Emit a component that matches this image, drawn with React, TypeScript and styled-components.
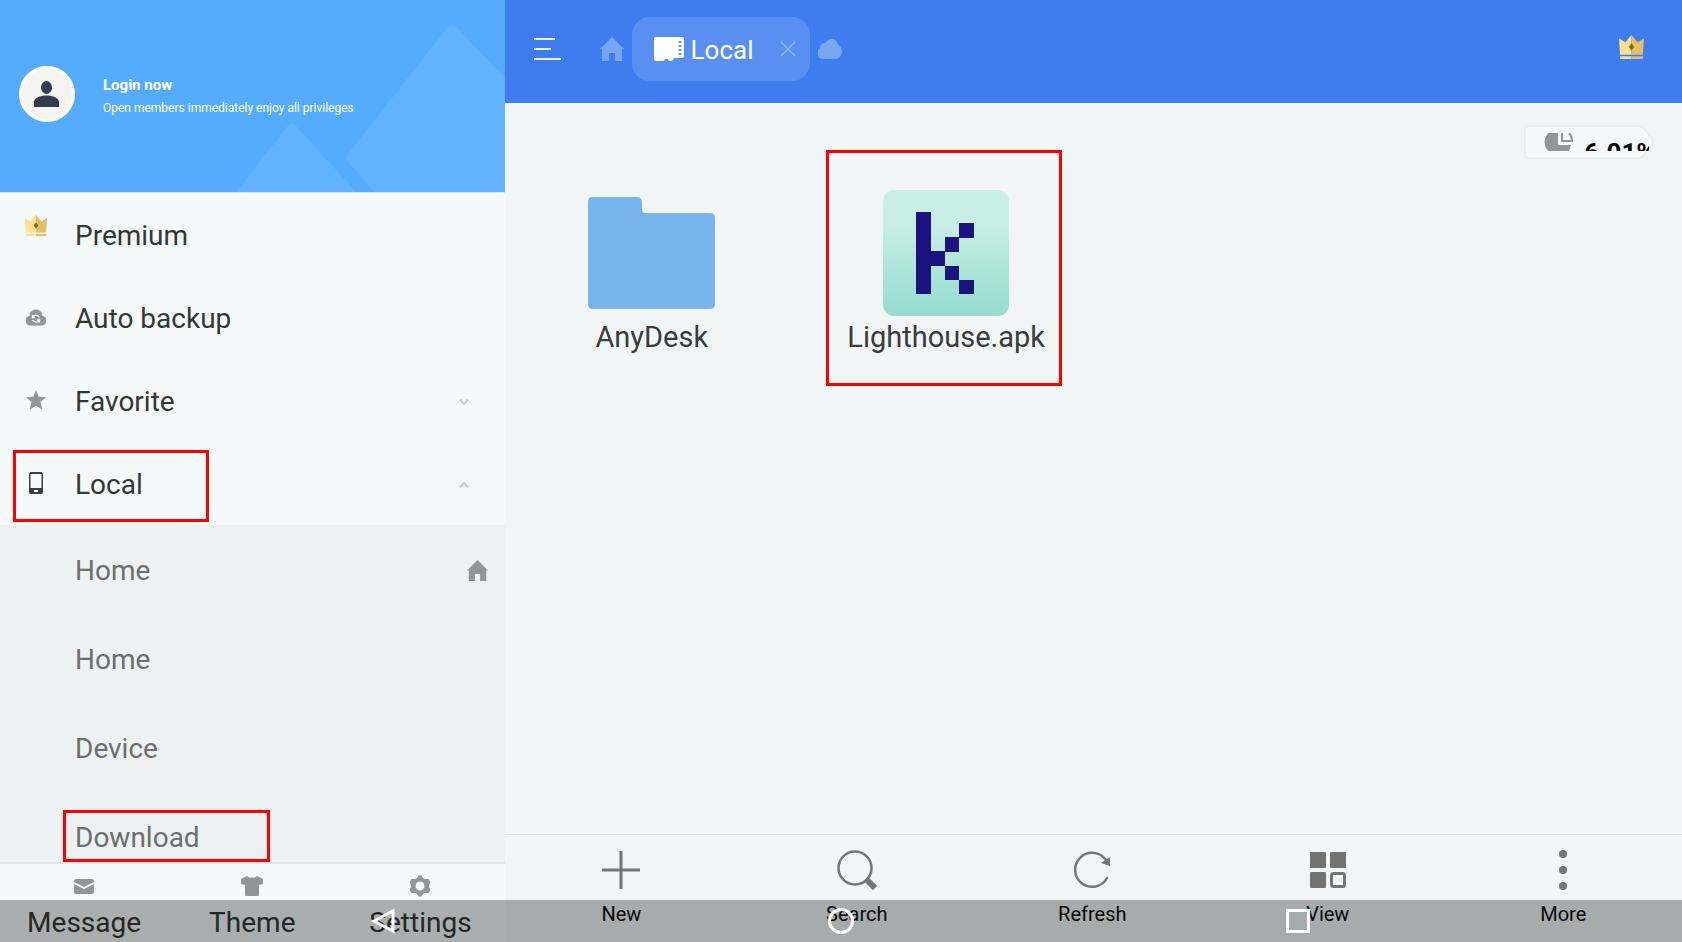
import React from "react";
import styled, { createGlobalStyle, css } from "styled-components";

const Global = createGlobalStyle`
  *, *::after { box-sizing: border-box; }
  body { margin: 0; font-family: Roboto, "Liberation Sans", sans-serif; background: #f1f5f6; }
  button { font: inherit; color: inherit; background: none; border: 0; padding: 0; margin: 0; text-align: left; }
  a { color: inherit; text-decoration: none; }
  svg { display: block; flex: none; }
`;

const mark = css`
  &::after {
    content: "";
    position: absolute;
    border: 3px solid #fe0000;
    pointer-events: none;
  }
`;

const Screen = styled.div`
  position: relative;
  display: flex;
  height: 100vh;
  overflow: hidden;
`;

const Sidebar = styled.aside`
  width: 30%;
  display: flex;
  flex-direction: column;
  background: #f5f9fa;
`;

const Profile = styled.header`
  position: relative;
  display: flex;
  align-items: center;
  gap: 28px;
  height: 193px;
  flex: none;
  padding: 0 0 5px 19px;
  border-bottom: 1px solid #cfe8f8;
  background: #55acff;
  color: #fff;
  overflow: hidden;
`;

const Peaks = styled.svg`
  position: absolute;
  right: 0;
  bottom: 0;
`;

const Avatar = styled.button`
  display: grid;
  place-items: center;
  width: 56px;
  height: 56px;
  border: 3px solid #fff;
  border-radius: 50%;
  background: #f4f4f2;
`;

const LoginText = styled.a`
  display: flex;
  flex-direction: column;
  gap: 5px;
  padding-top: 5px;
  font-size: 12px;
  line-height: 18px;
`;

const LoginTitle = styled.strong`
  font-size: 15px;
  line-height: 18px;
`;

const Menu = styled.nav`
  flex: 1;
  min-height: 0;
  overflow: hidden;
  font-size: 28px;
  line-height: 36px;
`;

const MenuRow = styled.button<{ $marked?: boolean }>`
  position: relative;
  display: flex;
  align-items: center;
  width: 100%;
  height: 83px;
  padding: 3px 35px 0 20px;
  color: #333837;
  ${(p) => p.$marked && mark}
  &::after { left: 13px; width: 196px; top: 8px; height: 72px; }
`;

const MenuIcon = styled.span<{ $raised?: boolean }>`
  display: grid;
  place-items: center;
  width: 32px;
  height: 48px;
  margin-right: 23px;
  padding-bottom: ${(p) => (p.$raised ? 20 : 4)}px;
`;

const RowLabel = styled.span`
  flex: 1;
`;

const SubMenu = styled.div`
  padding-top: 1px;
  background: #edf1f2;
  color: #6b6f6f;
`;

const SubRow = styled.button<{ $marked?: boolean }>`
  position: relative;
  display: flex;
  align-items: center;
  width: 100%;
  height: 89px;
  padding: 0 17px 0 75px;
  ${(p) => p.$marked && mark}
  &::after { left: 63px; width: 207px; top: 17px; height: 52px; }
`;

const SideTabs = styled.footer`
  display: grid;
  grid-template-columns: repeat(3, 1fr);
  flex: none;
  height: 80px;
  border-top: 2px solid #e3e7e8;
`;

const SideTab = styled.button`
  display: flex;
  flex-direction: column;
  align-items: center;
  gap: 8px;
  padding-top: 11px;
  height: 74px;
  overflow: hidden;
  font-size: 28px;
  line-height: 36px;
  color: #333837;
`;

const Main = styled.main`
  flex: 1;
  min-width: 0;
  display: flex;
  flex-direction: column;
  background: #f1f5f6;
`;

const TopBar = styled.header`
  display: flex;
  align-items: center;
  flex: none;
  height: 103px;
  padding: 0 37px 5px 29px;
  background: #3f7cee;
  color: #fff;
`;

const MenuButton = styled.button`
  margin-right: 38px;
`;

const Tab = styled.div`
  display: flex;
  align-items: center;
  gap: 7px;
  height: 64px;
  margin: 0 8px;
  padding: 0 14px 0 22px;
  border-radius: 18px;
  background: #5a8ff2;
  font-size: 26px;
  line-height: 32px;
`;

const TabTitle = styled.span`
  padding-top: 2px;
`;

const CloseTab = styled.button`
  margin-left: 19px;
`;

const Crown = styled.button`
  margin-left: auto;
  padding-bottom: 3px;
`;

const Files = styled.section`
  position: relative;
  flex: 1;
  padding-top: 83px;
`;

const FileGrid = styled.div`
  display: grid;
  grid-template-columns: repeat(4, 1fr);
`;

const File = styled.button<{ $marked?: boolean }>`
  position: relative;
  display: flex;
  flex-direction: column;
  align-items: center;
  font-size: 29px;
  line-height: 34px;
  color: #383c3c;
  ${(p) => p.$marked && mark}
  &::after { left: 50%; margin-left: -120px; width: 236px; top: -36px; height: 236px; }
`;

const FileArt = styled.span`
  display: grid;
  place-items: center;
  height: 134px;
`;

const Storage = styled.button`
  position: absolute;
  top: 22px;
  right: 28px;
  width: 130px;
  height: 34px;
`;

const StorageClip = styled.span`
  position: absolute;
  left: 20px;
  right: 5px;
  top: 8px;
  height: 18px;
  display: flex;
  gap: 10px;
  overflow: hidden;
  color: #000;
  font-size: 26px;
  font-weight: 700;
  line-height: 36px;
`;

const StorageValue = styled.span`
  padding-top: 2px;
`;

const ToolBar = styled.footer`
  display: grid;
  grid-template-columns: repeat(5, 1fr);
  flex: none;
  height: 108px;
  border-top: 1px solid #dfe3e4;
`;

const Tool = styled.button`
  display: flex;
  flex-direction: column;
  align-items: center;
  gap: 12px;
  padding: 15px 2px 0 0;
  font-size: 20px;
  line-height: 24px;
  color: #0c0d0d;
`;

const SystemButtons = styled.nav`
  position: absolute;
  left: 0;
  right: 0;
  bottom: 0;
  height: 42px;
  display: flex;
  align-items: center;
  justify-content: space-between;
  padding: 0 22%;
  background: rgba(0, 0, 0, 0.3);
`;

function CrownIcon({ size }: { size: number }) {
  return (
    <svg width={size} height={size} viewBox="0 0 26 26">
      <path d="M1 4l6 4 6-7v19H2z" fill="#fae192" />
      <path d="M25 4l-6 4-6-7v19h11z" fill="#e3bf68" />
      <path d="M2 21.500h11V24H2z" fill="#f7e2a5" />
      <path d="M13 21.500h11V24H13z" fill="#e3bf68" />
      <path d="M13 9l2.500 3.500L13 16l-2.500-3.500z" fill="#8f6804" />
    </svg>
  );
}

function HomeIcon({ color, size }: { color: string; size: number }) {
  return (
    <svg width={size} height={size} viewBox="0 0 24 24">
      <path d="M12 0L0 12h2v12h7v-8h6v8h7V12h2z" fill={color} />
    </svg>
  );
}

function Chevron({ up }: { up?: boolean }) {
  return (
    <svg width="12" height="8" viewBox="0 0 12 8" fill="none" stroke="#c6caca" strokeWidth="2">
      <path d={up ? "M2 6.500L6 2l4 4.500" : "M2 1.500L6 6l4-4.500"} />
    </svg>
  );
}

export default function App() {
  return (
    <>
      <Global />
      <Screen>
        <Sidebar>
          <Profile>
            <Peaks width="270" height="192" viewBox="0 0 270 192" aria-hidden="true">
              <g fill="#62b3ff">
                <path d="M1 192L53 126q4-5 8 0l60 66z" />
                <path d="M270 78L221 27q-5-4-9 1L113 154q-3 4 0 8l27 30h130z" />
              </g>
            </Peaks>
            <Avatar aria-label="Account">
              <svg width="26" height="26" viewBox="0 0 26 26" fill="#363b4d">
                <ellipse cx="12.500" cy="6.500" rx="5.500" ry="6.500" />
                <path d="M0 26v-5c0-4 6-6.500 12.500-6.500S25 17 25 21v5z" />
              </svg>
            </Avatar>
            <LoginText href="#login">
              <LoginTitle>Login now</LoginTitle>
              Open members immediately enjoy all privileges
            </LoginText>
          </Profile>
          <Menu>
            <MenuRow>
              <MenuIcon $raised><CrownIcon size={24} /></MenuIcon>
              <RowLabel>Premium</RowLabel>
            </MenuRow>
            <MenuRow>
              <MenuIcon>
                <svg width="22" height="17" viewBox="0 0 22 17">
                  <path d="M5 16.500a5 5 0 0 1-.5-9.800C5 3 7.500.5 11 .5s6 2.500 6.500 6.200a5 5 0 0 1-.5 9.800z" fill="#929696" />
                  <path d="M14.500 8.500a4 3.500 0 0 0-6.500-1.200M7.500 6v2.500h2.500M7.500 11a4 3.500 0 0 0 6.500 1M14.500 13.500v-2.500h-2.500" fill="none" stroke="#f5f9fa" strokeWidth="1.300" />
                </svg>
              </MenuIcon>
              <RowLabel>Auto backup</RowLabel>
            </MenuRow>
            <MenuRow>
              <MenuIcon>
                <svg width="20" height="20" viewBox="0 0 20 20" fill="#929696">
                  <path d="M10 0l2.800 6.700 7.200.6-5.400 4.800 1.600 7.400-6.200-3.700-6.200 3.700 1.600-7.400L0 7.300l7.200-.6z" />
                </svg>
              </MenuIcon>
              <RowLabel>Favorite</RowLabel>
              <Chevron />
            </MenuRow>
            <MenuRow $marked>
              <MenuIcon>
                <svg width="14" height="22" viewBox="0 0 14 22">
                  <path fillRule="evenodd" d="M2 0h10a2 2 0 0 1 2 2v18a2 2 0 0 1-2 2H2a2 2 0 0 1-2-2V2a2 2 0 0 1 2-2zM1.500 2v14h11V2zM5 18v2h4v-2z" fill="#3a3e3e" />
                </svg>
              </MenuIcon>
              <RowLabel>Local</RowLabel>
              <Chevron up />
            </MenuRow>
            <SubMenu>
              <SubRow>
                <RowLabel>Home</RowLabel>
                <HomeIcon color="#929696" size={21} />
              </SubRow>
              <SubRow>Home</SubRow>
              <SubRow>Device</SubRow>
              <SubRow $marked>Download</SubRow>
            </SubMenu>
          </Menu>
          <SideTabs>
            <SideTab>
              <svg width="20" height="22" viewBox="0 0 20 22" fill="#929696">
                <path d="M2 4h16a2 2 0 0 1 2 2v1l-10 5L0 7V6a2 2 0 0 1 2-2z" />
                <path d="M0 9l10 5 10-5v8a2 2 0 0 1-2 2H2a2 2 0 0 1-2-2z" />
              </svg>
              Message
            </SideTab>
            <SideTab>
              <svg width="22" height="22" viewBox="0 0 22 22" fill="#929696">
                <path d="M6 1l2 1.500h6L16 1l6 3v5l-4 1v10a1 1 0 0 1-1 1H5a1 1 0 0 1-1-1V10L0 9V4z" />
              </svg>
              Theme
            </SideTab>
            <SideTab>
              <svg width="22" height="22" viewBox="0 0 22 22">
                <path fillRule="evenodd" d="M8 3l1.500-2.500h3L14 3l2 1 3.500 0 2 3-1.500 3v2l1.500 3-2 3H16l-2 1-1.500 2.500h-3L8 19l-2-1H2.500l-2-3L2 12v-2L.5 7l2-3H6zM11 6.500a4.500 4.500 0 1 0 0 9 4.500 4.500 0 0 0 0-9z" fill="#929696" />
              </svg>
              Settings
            </SideTab>
          </SideTabs>
        </Sidebar>
        <Main>
          <TopBar>
            <MenuButton aria-label="Menu">
              <svg width="28" height="24" viewBox="0 0 28 24" fill="none" stroke="#e3f3fd" strokeWidth="2">
                <path d="M0 2h21M0 12h17M0 22h27" />
              </svg>
            </MenuButton>
            <button aria-label="Home"><HomeIcon color="#79a5f5" size={24} /></button>
            <Tab>
              <svg width="30" height="24" viewBox="0 0 30 24">
                <path d="M2 0h26a2 2 0 0 1 2 2v17a2 2 0 0 1-2 2h-8q-1 3-4 3-2 0-2-2h-3q0 2-2 2H2a2 2 0 0 1-2-2V2a2 2 0 0 1 2-2z" fill="#fff" />
                <path d="M26 4v15" stroke="#5a8ff2" strokeWidth="3" strokeDasharray="2 2" />
              </svg>
              <TabTitle>Local</TabTitle>
              <CloseTab aria-label="Close tab">
                <svg width="16" height="16" viewBox="0 0 16 16" stroke="#91b5f7" strokeWidth="1.500">
                  <path d="M1 1l14 14M15 1L1 15" />
                </svg>
              </CloseTab>
            </Tab>
            <button aria-label="Cloud">
              <svg width="24" height="20" viewBox="0 0 24 20" fill="#79a5f5">
                <path d="M6 20a6 6 0 0 1-4-11C2 6 4 4 7.500 4 9 1 11 0 13.500 0 17 0 19.500 2.500 20 6c2.500 1 4 3.500 4 6.500 0 4-3 7.500-6.500 7.500z" />
              </svg>
            </button>
            <Crown aria-label="Premium"><CrownIcon size={27} /></Crown>
          </TopBar>
          <Files>
            <Storage aria-label="Storage used">
              <svg width="130" height="34" viewBox="0 0 130 34">
                <path d="M4 1h110q4 0 6 3l8 10q2 3 0 6l-8 10q-2 3-6 3H4q-3 0-3-3V4q0-3 3-3z" fill="#f5f9fa" stroke="#e2e6e7" />
              </svg>
              <StorageClip>
                <svg width="30" height="30" viewBox="0 0 30 30">
                  <path d="M14 0v12h13l-2 6H4Q-3 9 4 0z" fill="#929696" />
                  <path d="M18 0v8h10q0-5-3-8" fill="none" stroke="#929696" strokeWidth="2" />
                </svg>
                <StorageValue>6.01%</StorageValue>
              </StorageClip>
            </Storage>
            <FileGrid>
              <File>
                <FileArt>
                  <svg width="127" height="112" viewBox="0 0 127 112">
                    <path d="M5 0h44q5 0 5 5v7q0 4 4 4h64q5 0 5 5v86q0 5-5 5H5q-5 0-5-5V5q0-5 5-5z" fill="#77b4eb" />
                  </svg>
                </FileArt>
                AnyDesk
              </File>
              <File $marked>
                <FileArt>
                  <svg width="126" height="126" viewBox="0 0 126 126">
                    <defs>
                      <linearGradient id="mint" x1="0" y1="0" x2="0" y2="1">
                        <stop offset="0" stopColor="#c9eee6" />
                        <stop offset="0.300" stopColor="#c8ede5" />
                        <stop offset="0.650" stopColor="#abe5d9" />
                        <stop offset="1" stopColor="#96dccf" />
                      </linearGradient>
                    </defs>
                    <rect width="126" height="126" rx="11" fill="url(#mint)" />
                    <path d="M33 22h15v39h14V47h14V33h15v15H76v14H62v14h14v14h15v14H76V90H62V76H48v28H33z" fill="#1c137e" />
                  </svg>
                </FileArt>
                Lighthouse.apk
              </File>
            </FileGrid>
          </Files>
          <ToolBar>
            <Tool>
              <svg width="40" height="40" viewBox="0 0 40 40" stroke="#737675" strokeWidth="3">
                <path d="M20 1v38M1 20h38" />
              </svg>
              New
            </Tool>
            <Tool>
              <svg width="40" height="40" viewBox="0 0 40 40" fill="none" stroke="#737675">
                <circle cx="18" cy="18" r="16.500" strokeWidth="2.500" />
                <path d="M29 29l9 9" strokeWidth="6" />
              </svg>
              Search
            </Tool>
            <Tool>
              <svg width="40" height="40" viewBox="0 0 40 40" fill="none" stroke="#737675">
                <path d="M34 10A17 17 0 1 0 35 28" strokeWidth="2.500" strokeLinecap="round" />
                <path d="M38 7v9l-9-3z" fill="#737675" stroke="none" />
              </svg>
              Refresh
            </Tool>
            <Tool>
              <svg width="40" height="40" viewBox="0 0 40 40" fill="#737472">
                <rect x="2" y="2" width="16" height="16" rx="1" />
                <rect x="22" y="2" width="16" height="16" rx="1" />
                <rect x="2" y="22" width="16" height="16" rx="1" />
                <rect x="23.500" y="23.500" width="13" height="13" rx="2" fill="none" stroke="#737675" strokeWidth="3" />
              </svg>
              View
            </Tool>
            <Tool>
              <svg width="40" height="40" viewBox="0 0 40 40" fill="#737675">
                <circle cx="20" cy="4" r="4" />
                <circle cx="20" cy="20" r="4" />
                <circle cx="20" cy="36" r="4" />
              </svg>
              More
            </Tool>
          </ToolBar>
        </Main>
        <SystemButtons aria-label="System navigation">
          <button aria-label="Back">
            <svg width="26" height="26" viewBox="0 0 26 26" fill="none" stroke="#fff" strokeWidth="3">
              <path d="M4 13L23 3v20z" />
            </svg>
          </button>
          <button aria-label="Home">
            <svg width="26" height="26" viewBox="0 0 26 26" fill="none" stroke="#fff" strokeWidth="3">
              <circle cx="13" cy="13" r="11.500" />
            </svg>
          </button>
          <button aria-label="Recent apps">
            <svg width="26" height="26" viewBox="0 0 26 26" fill="none" stroke="#fff" strokeWidth="3">
              <rect x="1.500" y="2.500" width="21" height="21" />
            </svg>
          </button>
        </SystemButtons>
      </Screen>
    </>
  );
}
